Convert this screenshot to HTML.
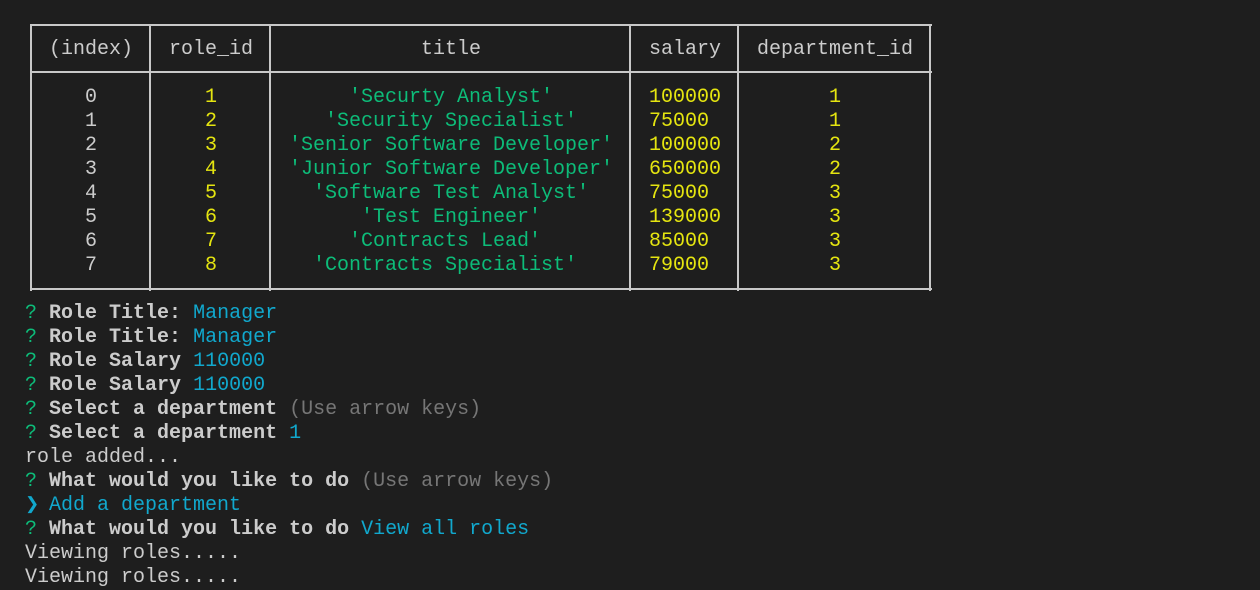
<!DOCTYPE html>
<html><head><style>
html,body{margin:0;padding:0;background:#1e1e1e;width:1260px;height:578px;overflow:hidden}
.t{position:absolute;font-family:"Liberation Mono",monospace;font-size:20px;line-height:24px;white-space:pre;color:#cccccc}
.y{color:#e5e510}.g{color:#0dbc79}.c{color:#11a8cd}.d{color:#767676}.b{font-weight:bold}
.ar{display:inline-block;width:12px;height:24px;line-height:24px;vertical-align:top;overflow:visible;font-size:17px}
.h{position:absolute;height:2px;background:#c8c8c8;left:30px;width:902px}
.v{position:absolute;width:2px;background:#c8c8c8;top:25px;height:266px}
</style></head><body>
<div class="h" style="top:24px"></div>
<div class="h" style="top:71px"></div>
<div class="h" style="top:288px"></div>
<div class="v" style="left:30px"></div>
<div class="v" style="left:149px"></div>
<div class="v" style="left:269px"></div>
<div class="v" style="left:629px"></div>
<div class="v" style="left:737px"></div>
<div class="v" style="left:929px"></div>

<div class="t" style="left:49px;top:38px">(index)</div>
<div class="t" style="left:169px;top:38px">role_id</div>
<div class="t" style="left:421px;top:38px">title</div>
<div class="t" style="left:649px;top:38px">salary</div>
<div class="t" style="left:757px;top:38px">department_id</div>

<div class="t" style="left:85px;top:86px">0
1
2
3
4
5
6
7</div>
<div class="t y" style="left:205px;top:86px">1
2
3
4
5
6
7
8</div>
<div class="t g" style="left:289px;top:86px">     'Securty Analyst'
   'Security Specialist'
'Senior Software Developer'
'Junior Software Developer'
  'Software Test Analyst'
      'Test Engineer'
     'Contracts Lead'
  'Contracts Specialist'</div>
<div class="t y" style="left:649px;top:86px">100000
75000
100000
650000
75000
139000
85000
79000</div>
<div class="t y" style="left:829px;top:86px">1
1
2
2
3
3
3
3</div>

<div class="t" style="left:25px;top:302px"><span class="g">?</span> <span class="b">Role Title:</span> <span class="c">Manager</span>
<span class="g">?</span> <span class="b">Role Title:</span> <span class="c">Manager</span>
<span class="g">?</span> <span class="b">Role Salary</span> <span class="c">110000</span>
<span class="g">?</span> <span class="b">Role Salary</span> <span class="c">110000</span>
<span class="g">?</span> <span class="b">Select a department</span> <span class="d">(Use arrow keys)</span>
<span class="g">?</span> <span class="b">Select a department</span> <span class="c">1</span>
role added...
<span class="g">?</span> <span class="b">What would you like to do</span> <span class="d">(Use arrow keys)</span>
<span class="c"><span class="ar">❯</span> Add a department</span>
<span class="g">?</span> <span class="b">What would you like to do</span> <span class="c">View all roles</span>
Viewing roles.....
Viewing roles.....</div>
</body></html>
